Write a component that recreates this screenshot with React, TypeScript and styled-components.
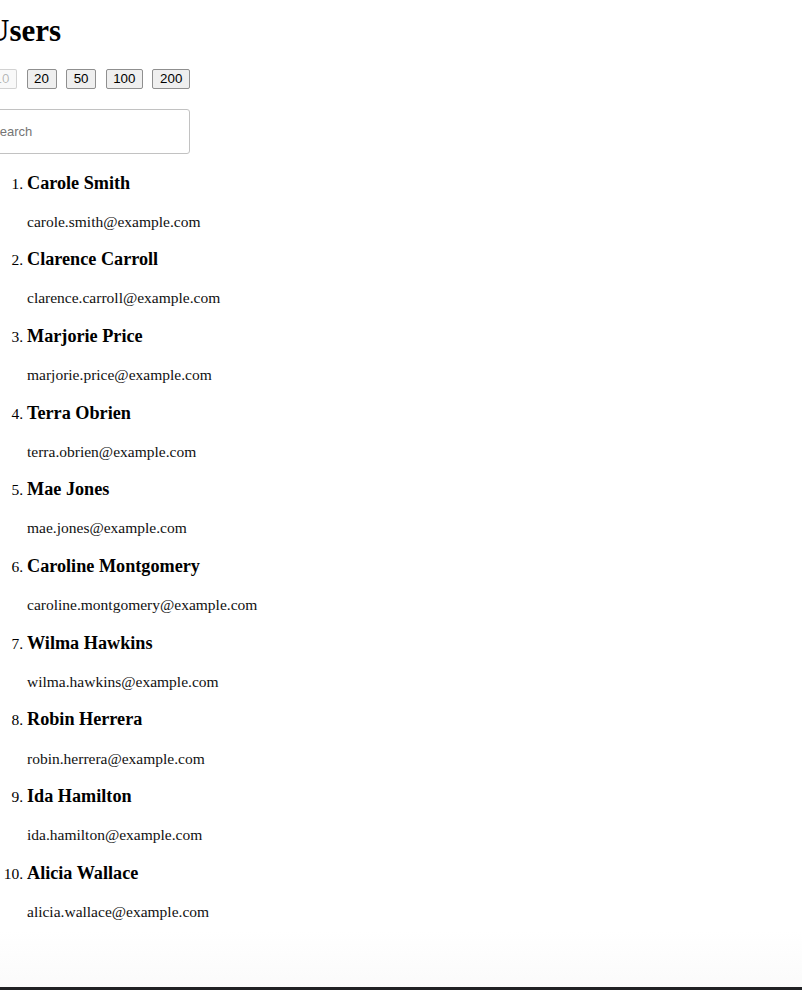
import React from "react";
import styled, { createGlobalStyle } from "styled-components";

const GlobalStyle = createGlobalStyle`
  html, body {
    margin: 0;
    padding: 0;
    background: #ffffff;
    overflow: hidden;
  }
  body {
    font-family: "Liberation Serif", "Times New Roman", serif;
    color: #000;
  }
`;

const Page = styled.div`
  min-height: 100vh;
  display: flex;
  flex-direction: column;
  background: linear-gradient(180deg, #ffffff 0%, #ffffff 94%, #fafafa 100%);
`;

const Content = styled.main`
  flex: 1;
  margin-left: -13px;
`;

const Title = styled.h1`
  font-family: "Liberation Serif", "Times New Roman", serif;
  font-size: 31px;
  line-height: 37px;
  font-weight: 700;
  margin: 12px 0 20px;
`;

const PageSizes = styled.div`
  display: flex;
  gap: 9.5px;
  height: 20px;
  align-items: stretch;
`;

const SizeButton = styled.button`
  font-family: "Liberation Sans", Arial, sans-serif;
  font-size: 13.33px;
  line-height: 16px;
  padding: 1px 6.6px;
  margin: 0;
  background: #efefef;
  color: #000;
  border: 1px solid #8f8f8f;
  border-radius: 2px;
  box-sizing: border-box;
  height: 20px;

  &:disabled {
    color: rgba(16, 16, 16, 0.3);
    background: rgba(239, 239, 239, 0.4);
    border-color: rgba(118, 118, 118, 0.3);
  }
`;

const Search = styled.input`
  display: block;
  margin-top: 20px;
  box-sizing: border-box;
  width: 203px;
  height: 45px;
  padding: 0 3px;
  font-family: "Liberation Sans", Arial, sans-serif;
  font-size: 13px;
  border: 1px solid #c2c2c2;
  border-radius: 3px;
  background: #fff;
  outline: none;

  &::placeholder {
    color: #757575;
  }
`;

const UserList = styled.ol`
  margin: 0;
  padding-left: 40px;
  font-size: 15.5px;
  line-height: 21.5px;
`;

const UserItem = styled.li``;

const Name = styled.h3`
  font-family: "Liberation Serif", "Times New Roman", serif;
  font-size: 18.2px;
  line-height: 21.5px;
  font-weight: 700;
  margin: 18.6px 0;
`;

const Email = styled.p`
  font-size: 15.5px;
  line-height: 18px;
  margin: 18.6px 0;
  color: #111;
`;

const BottomBar = styled.div`
  height: 3px;
  background: #202124;
  flex-shrink: 0;
`;

const sizes = [10, 20, 50, 100, 200];

const users = [
  "Carole Smith",
  "Clarence Carroll",
  "Marjorie Price",
  "Terra Obrien",
  "Mae Jones",
  "Caroline Montgomery",
  "Wilma Hawkins",
  "Robin Herrera",
  "Ida Hamilton",
  "Alicia Wallace",
];

const toEmail = (name: string) =>
  name.toLowerCase().replace(" ", ".") + "@example.com";

export default function App() {
  return (
    <Page>
      <GlobalStyle />
      <Content>
        <Title>Users</Title>
        <PageSizes>
          {sizes.map((s) => (
            <SizeButton key={s} disabled={s === 10}>
              {s}
            </SizeButton>
          ))}
        </PageSizes>
        <Search placeholder="Search" />
        <UserList>
          {users.map((u) => (
            <UserItem key={u}>
              <Name>{u}</Name>
              <Email>{toEmail(u)}</Email>
            </UserItem>
          ))}
        </UserList>
      </Content>
      <BottomBar />
    </Page>
  );
}
